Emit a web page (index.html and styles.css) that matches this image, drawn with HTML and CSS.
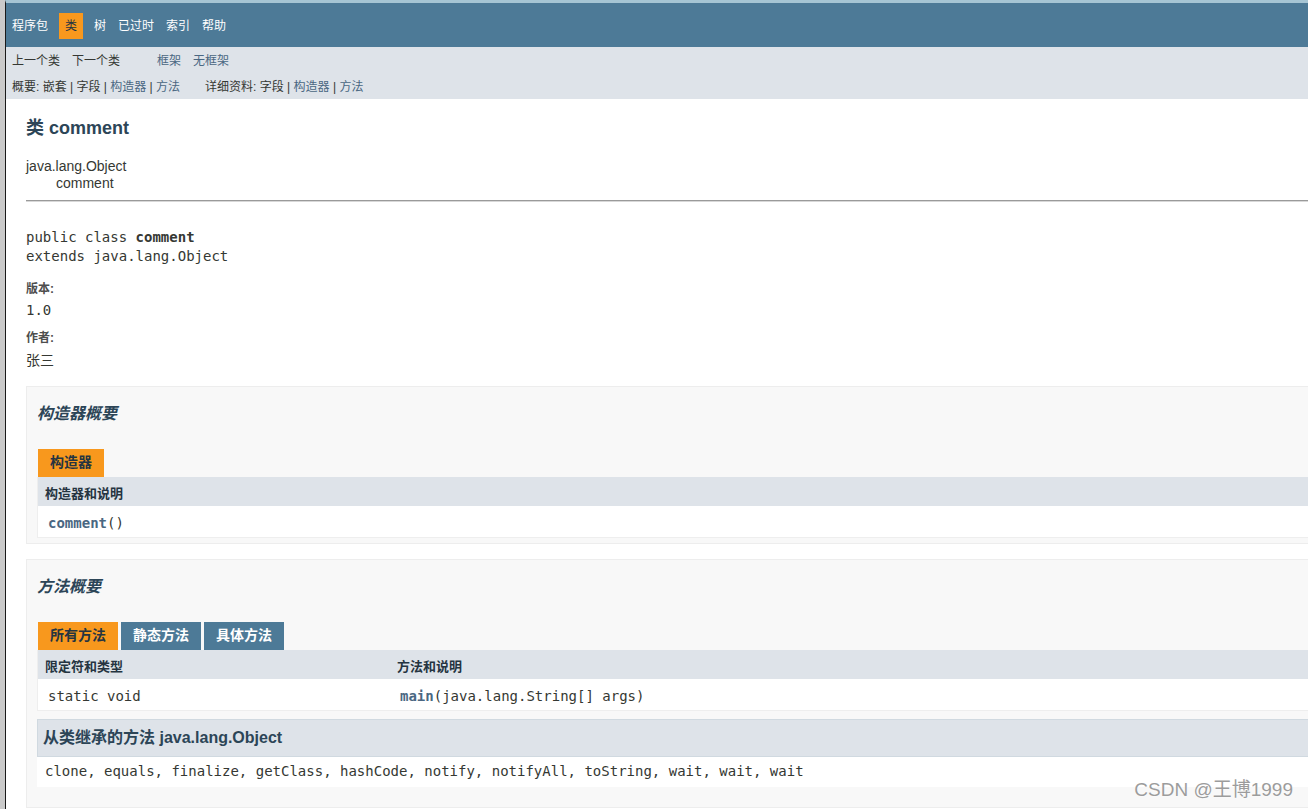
FILE: index.html
```html
<!DOCTYPE html>
<html lang="zh-CN">
<head>
<meta charset="utf-8">
<title>comment</title>
<link rel="stylesheet" href="styles.css">
</head>
<body>
<div class="window">
  <div class="frameEdge"></div>
  <div class="page">
    <nav class="topNav">
      <ul class="navList">
        <li>程序包</li>
        <li class="current">类</li>
        <li>树</li>
        <li>已过时</li>
        <li>索引</li>
        <li>帮助</li>
      </ul>
    </nav>
    <div class="subNav">
      <div class="subRow first">
        <ul class="navList">
          <li>上一个类</li>
          <li>下一个类</li>
        </ul>
        <ul class="navList">
          <li><a class="link">框架</a></li>
          <li><a class="link">无框架</a></li>
        </ul>
      </div>
      <div class="subRow second">
        <ul class="subNavList">
          <li>概要:&nbsp;</li>
          <li>嵌套&nbsp;|&nbsp;</li>
          <li>字段&nbsp;|&nbsp;</li>
          <li><a class="link">构造器</a>&nbsp;|&nbsp;</li>
          <li><a class="link">方法</a></li>
        </ul>
        <ul class="subNavList">
          <li>详细资料:&nbsp;</li>
          <li>字段&nbsp;|&nbsp;</li>
          <li><a class="link">构造器</a>&nbsp;|&nbsp;</li>
          <li><a class="link">方法</a></li>
        </ul>
      </div>
    </div>

    <div class="header">
      <h2 class="title">类 comment</h2>
    </div>

    <div class="contentContainer">
      <ul class="inheritance">
        <li>java.lang.Object</li>
        <li>
          <ul class="inheritance nested">
            <li>comment</li>
          </ul>
        </li>
      </ul>
      <hr class="rule">
      <pre class="signature">public class <b>comment</b>
extends java.lang.Object</pre>
      <dl class="tags">
        <dt class="firstTag">版本:</dt>
        <dd><code>1.0</code></dd>
        <dt>作者:</dt>
        <dd class="plain">张三</dd>
      </dl>

      <section class="summaryBox firstBox">
        <h3 class="summaryTitle">构造器概要</h3>
        <table class="memberSummary">
          <caption><span class="tab active">构造器</span></caption>
          <tr><th class="colOne">构造器和说明</th></tr>
          <tr><td class="colOne"><code><a class="memberLink">comment</a>()</code></td></tr>
        </table>
      </section>

      <section class="summaryBox">
        <h3 class="summaryTitle">方法概要</h3>
        <table class="memberSummary">
          <caption><span class="tab active">所有方法</span><span class="tab">静态方法</span><span class="tab">具体方法</span></caption>
          <tr><th class="colFirst">限定符和类型</th><th class="colLast">方法和说明</th></tr>
          <tr><td class="colFirst"><code>static void</code></td><td class="colLast"><code><a class="memberLink">main</a>(java.lang.String[]&nbsp;args)</code></td></tr>
        </table>
        <div class="inherited">
          <h3 class="inheritedTitle">从类继承的方法&nbsp;java.lang.Object</h3>
          <code class="inheritedList">clone, equals, finalize, getClass, hashCode, notify, notifyAll, toString, wait, wait, wait</code>
        </div>
      </section>
    </div>
  </div>
  <div class="watermark">CSDN @王博1999</div>
</div>
</body>
</html>
```
FILE: styles.css
```css
html, body {
  margin: 0;
  padding: 0;
}

body {
  background: #ffffff;
  font-family: "Liberation Sans", "Noto Sans CJK SC", sans-serif;
  font-size: 14px;
  color: #353833;
}

.window {
  position: relative;
  width: 1308px;
  height: 809px;
  overflow: hidden;
  display: flex;
  background: #ffffff;
}

.frameEdge {
  flex: none;
  width: 5px;
  background: #cacaca;
}

.page {
  flex: none;
  width: 1400px;
  border-left: 1px solid #1a1a1a;
  border-top: 3px solid #a6c5d4;
  background: #ffffff;
}

/* top navigation */
.topNav {
  background: #4D7A97;
  color: #ffffff;
  height: 33.6px;
  padding-top: 10px;
  font-size: 12px;
}

.navList {
  display: flex;
  margin: 0 25px 0 0;
  padding: 0;
  list-style: none;
}

.navList li {
  padding: 5px 6px;
  line-height: 16px;
}

.navList li.current {
  background: #F8981D;
  color: #253441;
  margin: 0 5px;
}

/* sub navigation */
.subNav {
  background: #dee3e9;
  font-size: 12px;
  height: 52px;
}

.subRow {
  display: flex;
}

.subRow.first .navList li {
  padding: 6px 6px 4px;
}

.subRow.second {
  padding: 6px 0 4px 6px;
}

.subNavList {
  display: flex;
  margin: 0 25px 0 0;
  padding: 0;
  list-style: none;
  line-height: 16px;
  white-space: pre;
}

.link {
  color: #4A6782;
  text-decoration: none;
}

/* header */
.header {
  padding: 18px 20px 0;
}

.title {
  margin: 0;
  font-size: 18px;
  line-height: 22px;
  font-weight: bold;
  color: #2c4557;
}

/* content */
.contentContainer {
  padding: 19px 20px 0;
}

.inheritance {
  margin: 0;
  padding: 0;
  list-style: none;
  line-height: 16px;
}

.inheritance.nested {
  margin-left: 15px;
  padding-left: 15px;
  padding-top: 1px;
}

.rule {
  margin: 9px 0 0;
  border: 0;
  border-top: 1px solid #9a9a9a;
  border-bottom: 1px solid #d8d8d8;
  height: 0;
}

code, pre {
  font-family: "DejaVu Sans Mono", "Noto Sans CJK SC", monospace;
  font-size: 14px;
}

.signature {
  margin: 26px 0 0;
  line-height: 19.6px;
  color: #353833;
}

.tags {
  margin: 0;
}

.tags dt {
  margin: 10px 0 0;
  font-size: 12px;
  line-height: 16.8px;
  font-weight: bold;
  color: #4E4E4E;
}

.tags dt.firstTag {
  margin-top: 14px;
}

.tags dd {
  margin: 3px 0 0;
  line-height: 19.6px;
}

.tags dd.plain {
  margin-top: 4px;
}

/* summary boxes */
.summaryBox {
  margin-top: 15px;
  padding: 0 20px 5px 10px;
  border: 1px solid #ededed;
  background: #f8f8f8;
}

.summaryBox.firstBox {
  margin-top: 15px;
}

.summaryTitle {
  margin: 16px 0 14px;
  font-size: 16px;
  line-height: 22.4px;
  font-style: italic;
  font-weight: bold;
  color: #2c4557;
}

.memberSummary {
  width: 100%;
  border-collapse: separate;
  border-spacing: 0;
  border-left: 1px solid #eeeeee;
  border-right: 1px solid #eeeeee;
  border-bottom: 1px solid #eeeeee;
}

.memberSummary caption {
  text-align: left;
  padding: 10px 0 0 1px;
  overflow: hidden;
  white-space: pre;
}

.tab {
  float: left;
  height: 16px;
  padding: 5px 12px 7px;
  margin-right: 3px;
  line-height: 16px;
  font-size: 14px;
  font-weight: bold;
  background: #4D7A97;
  color: #ffffff;
}

.tab.active {
  background: #F8981D;
  color: #253441;
}

.memberSummary th {
  background: #dee3e9;
  text-align: left;
  padding: 8px 3px 3px 7px;
  font-size: 13px;
  line-height: 18.2px;
  font-weight: bold;
  color: #253441;
}

.memberSummary th.colFirst {
  box-sizing: border-box;
  width: 352px;
}

.memberSummary td {
  background: #ffffff;
  padding: 8px 3px 3px 10px;
  line-height: 19.6px;
  vertical-align: top;
  white-space: nowrap;
}

.memberLink {
  color: #4A6782;
  font-weight: bold;
  text-decoration: none;
}

/* inherited methods */
.inherited {
  margin: 8px 0 15px;
  padding: 0 0 5px 8px;
  background: #ffffff;
}

.inheritedTitle {
  margin: 0 0 5px -8px;
  padding: 7px 5px;
  background: #dee3e9;
  border: 1px solid #d0d9e0;
  font-size: 16px;
  line-height: 22.4px;
  font-weight: bold;
  font-style: normal;
  color: #2c4557;
}

.inheritedList {
  display: block;
  line-height: 19.6px;
}

/* watermark overlay */
.watermark {
  position: absolute;
  right: 15px;
  bottom: 8px;
  font-size: 19px;
  line-height: 22px;
  color: #9c9c9c;
  text-shadow: 0 0 2px #ffffff, 0 0 1px #ffffff;
}
```
